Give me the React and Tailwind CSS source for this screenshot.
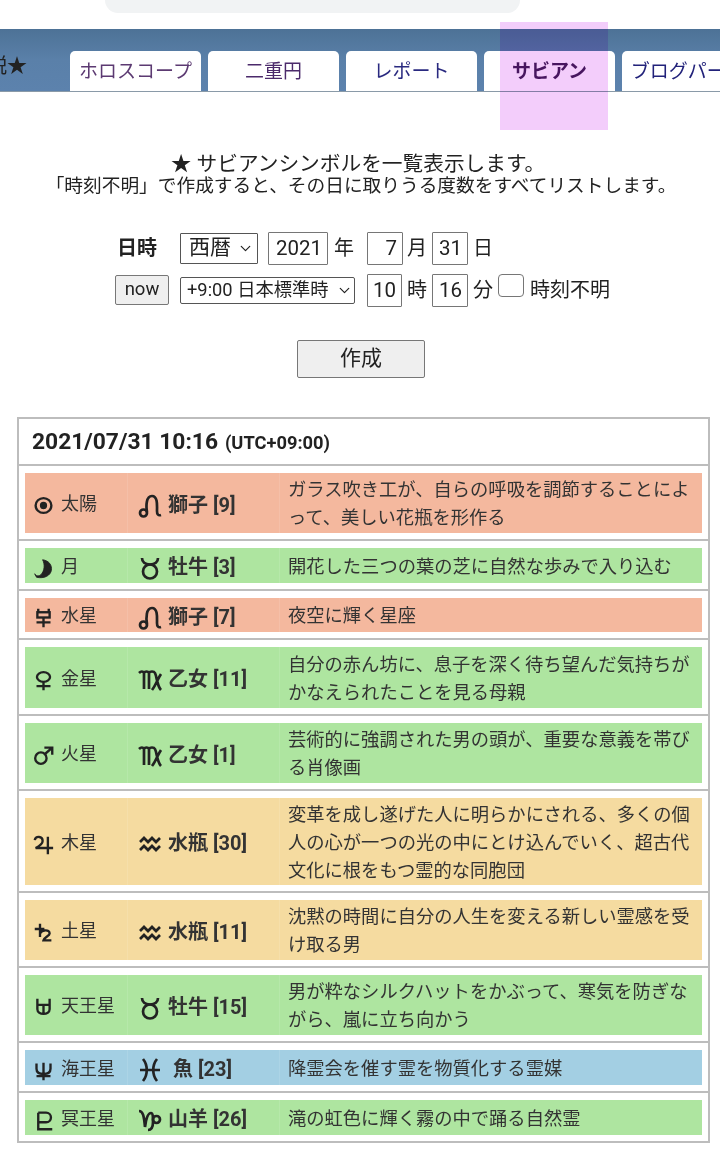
import { ChevronDown } from "lucide-react";

const jp = 'font-["Roboto","Noto_Sans_CJK_JP",sans-serif]';

// planet glyphs
const planets = {
  sun: (
    <>
      <ellipse cx="12" cy="12" rx="9" ry="8.5" />
      <circle cx="12" cy="12" r="2.8" fill="currentColor" />
    </>
  ),
  moon: <path d="M11 2c7 1 11 6 10 12-1 6-8 10-17 8l-2-4c1 3 5 3 7 1 4-4 5-11 2-17z" fill="currentColor" strokeWidth="1" />,
  mercury: (
    <>
      <path d="M6 2v4M18 2v4" />
      <rect x="5" y="6" width="14" height="6" />
      <path d="M12 12v11M4 17.500h16" />
    </>
  ),
  venus: (
    <>
      <ellipse cx="12" cy="8" rx="7.500" ry="5.500" />
      <path d="M12 14v9M4 18.500h16" />
    </>
  ),
  mars: (
    <>
      <circle cx="9" cy="15" r="6.500" />
      <path d="M14 10l8-7M13 3h9v8" />
    </>
  ),
  jupiter: <path d="M2 7c1-5 9-5 9 1 0 4-4 6-8 8h20M17 3v20" />,
  saturn: <path d="M8 2v15M2 8h11M8 13c2-4 11-5 11 0 0 3-6 4-7 8h9" />,
  uranus: <path d="M5 2v12c0 7 14 7 14 0V2M5 9h14M12 9v9" />,
  neptune: <path d="M4 4v6c0 4 3 6 8 6s8-2 8-6V4M12 3v20M4 18.500h16" />,
  pluto: <path d="M6 3v19h16M6 3h9a5 5 0 0 1 0 11H6" />,
};

// zodiac glyphs
const signs = {
  leo: (
    <>
      <circle cx="5.500" cy="19" r="3.500" />
      <path d="M9 18C8 12 8 2 14 2c6 0 5 10 5 15 0 3 1 5 4 4" />
    </>
  ),
  taurus: (
    <>
      <circle cx="12" cy="15.500" r="7" />
      <path d="M4 2c0 4 3 6.500 8 6.500S20 6 20 2" />
    </>
  ),
  virgo: <path d="M1 5c2-2 4-2 5 0V21M6 5c1-2 4-2 5 0V21M11 5c1-2 5-2 6 0 2 4 2 13 6 17M23 6c-3 4-5 11-9 16" />,
  aquarius: <path d="M2 10l4-4 4 4 4-4 4 4 4-4M2 18l4-4 4 4 4-4 4 4 4-4" />,
  pisces: <path d="M5 1c5 6 5 16 0 22M19 1c-5 6-5 16 0 22M2 12h20" />,
  capricorn: (
    <>
      <path d="M1 3c4 0 5 5 6 16 1-8 3-14 6-14 2 0 2 5 2 9 0 5-1 8-5 8" />
      <circle cx="18.500" cy="11.500" r="3.500" />
    </>
  ),
};

const rows = [
  { p: "sun", name: "太陽", s: "leo", sign: "獅子 [9]", text: "ガラス吹き工が、自らの呼吸を調節することによって、美しい花瓶を形作る", bg: "bg-[#f4b89e]", h: "h-[60px]" },
  { p: "moon", name: "月", s: "taurus", sign: "牡牛 [3]", text: "開花した三つの葉の芝に自然な歩みで入り込む", bg: "bg-[#aee5a0]", h: "h-[35px]" },
  { p: "mercury", name: "水星", s: "leo", sign: "獅子 [7]", text: "夜空に輝く星座", bg: "bg-[#f4b89e]", h: "h-[34px]" },
  { p: "venus", name: "金星", s: "virgo", sign: "乙女 [11]", text: "自分の赤ん坊に、息子を深く待ち望んだ気持ちがかなえられたことを見る母親", bg: "bg-[#aee5a0]", h: "h-[61px]" },
  { p: "mars", name: "火星", s: "virgo", sign: "乙女 [1]", text: "芸術的に強調された男の頭が、重要な意義を帯びる肖像画", bg: "bg-[#aee5a0]", h: "h-[60px]" },
  { p: "jupiter", name: "木星", s: "aquarius", sign: "水瓶 [30]", text: "変革を成し遂げた人に明らかにされる、多くの個人の心が一つの光の中にとけ込んでいく、超古代文化に根をもつ霊的な同胞団", bg: "bg-[#f5dba0]", h: "h-[87px]" },
  { p: "saturn", name: "土星", s: "aquarius", sign: "水瓶 [11]", text: "沈黙の時間に自分の人生を変える新しい霊感を受け取る男", bg: "bg-[#f5dba0]", h: "h-[60px]" },
  { p: "uranus", name: "天王星", s: "taurus", sign: "牡牛 [15]", text: "男が粋なシルクハットをかぶって、寒気を防ぎながら、嵐に立ち向かう", bg: "bg-[#aee5a0]", h: "h-[60px]" },
  { p: "neptune", name: "海王星", s: "pisces", sign: "魚 [23]", text: "降霊会を催す霊を物質化する霊媒", bg: "bg-[#a3cfe3]", h: "h-[35px]", indent: true },
  { p: "pluto", name: "冥王星", s: "capricorn", sign: "山羊 [26]", text: "滝の虹色に輝く霧の中で踊る自然霊", bg: "bg-[#aee5a0]", h: "h-[35px]" },
];

const tabs = [
  { label: "ホロスコープ", color: "text-[#5c3a72]" },
  { label: "二重円", color: "text-[#4b2a6b]" },
  { label: "レポート", color: "text-[#2a2a80]" },
  { label: "サビアン", color: "text-[#4a1a60] font-bold" },
  { label: "ブログパーツ", color: "text-[#22227a]" },
];

function Glyph({ children, className }) {
  return (
    <svg viewBox="0 0 24 24" fill="none" stroke="currentColor" strokeWidth="2.7" className={className}>
      {children}
    </svg>
  );
}

function NumBox({ value, className }) {
  return (
    <input
      readOnly
      value={value}
      className={`h-[33px] border border-[#767676] bg-white text-right text-[20.5px] text-[#222] pl-[2px] pr-[5px] rounded-[1px] ${className}`}
    />
  );
}

function Row({ row }) {
  return (
    <div className="pt-[7px] pb-[6px] px-[6px] border-b-2 border-[#bdbdbd] last:border-b-0">
      <div className={`flex ${row.h} ${row.bg} text-[#333]`}>
        <div className="w-[102px] flex items-center pl-[8px] text-[18px]">
          <Glyph className="w-[21px] h-[21px] mt-[5px] shrink-0 text-[#222]">{planets[row.p]}</Glyph>
          <span className="ml-[7px] pt-[1px] whitespace-nowrap">{row.name}</span>
        </div>
        <div className="w-[152px] flex items-center pl-[10px] border-l border-white/10 text-[20px] font-bold">
          <Glyph className="w-[24px] h-[24px] mt-[5px] shrink-0 text-[#222]">{signs[row.s]}</Glyph>
          <span className={`whitespace-nowrap pt-[3px] ${row.indent ? "ml-[11px]" : "ml-[6px]"}`}>{row.sign}</span>
        </div>
        <div className="flex-1 flex items-center pl-[8px] pr-[5px] pt-[2px] border-l border-white/10 text-[18.3px] leading-[28px]">
          <p>{row.text}</p>
        </div>
      </div>
    </div>
  );
}

export default function App() {
  return (
    <div className={`relative w-[720px] h-[1151px] overflow-hidden bg-white ${jp}`}>
      {/* browser search bar remnant */}
      <div className="ml-[105px] w-[415px] h-[13px] bg-[#f1f3f4] rounded-b-[22px]" />

      {/* header band */}
      <div className="mt-[16px] h-[63px] bg-gradient-to-b from-[#4d7296] via-[#5a80a9] to-[#5c82ad] border-b border-[#8a9aa8] flex items-end overflow-hidden">
        <div className="w-[70px] shrink-0 self-center flex justify-end pr-[43px] pt-[12px] text-[20px] text-[#222] whitespace-nowrap overflow-hidden">
          <span className="shrink-0">説★</span>
        </div>
        <div className="flex gap-[7px]">
          {tabs.map((t) => (
            <div
              key={t.label}
              className={`w-[131px] h-[40px] shrink-0 bg-white rounded-t-[5px] flex items-center justify-center pt-[2px] text-[19px] whitespace-nowrap overflow-hidden ${t.color}`}
            >
              {t.label}
            </div>
          ))}
        </div>
      </div>

      {/* highlight over the current tab */}
      <div className="absolute left-[500px] top-[22px] w-[108px] h-[108px] bg-[#f3cdfb] mix-blend-multiply" />

      {/* intro */}
      <div className="mt-[59px] text-center text-[#222]">
        <p className="text-[20.7px] leading-[24px] pr-[4px] pt-[1px]">★ サビアンシンボルを一覧表示します。</p>
        <p className="text-[18.7px] leading-[20px] pl-[2px] whitespace-nowrap">「時刻不明」で作成すると、その日に取りうる度数をすべてリストします。</p>
      </div>

      {/* form */}
      <div className="mt-[35px] pl-[115px] text-[#222] text-[20px]">
        <div className="flex items-center h-[34px]">
          <span className="w-[65px] pl-[2px] font-bold">日時</span>
          <div className="w-[78px] h-[31px] border border-[#555] rounded-[1px] flex items-center justify-between pl-[8px] pr-[3px]">
            <span className="text-[21px]">西暦</span>
            <ChevronDown className="w-[17px] h-[17px]" strokeWidth={1.7} />
          </div>
          <NumBox value="2021" className="w-[60px] ml-[10px]" />
          <span className="ml-[6px]">年</span>
          <NumBox value="7" className="w-[36px] ml-[13px]" />
          <span className="ml-[4px]">月</span>
          <NumBox value="31" className="w-[36px] ml-[5px]" />
          <span className="ml-[5px]">日</span>
        </div>
        <div className="flex items-center h-[34px] mt-[8px]">
          <button className="w-[54px] h-[30px] bg-[#efefef] border border-[#777] rounded-[2px] text-[18.5px]">now</button>
          <div className="w-[175px] h-[27px] ml-[11px] border border-[#555] rounded-[2px] flex items-center justify-between pl-[6px] pr-[1px] text-[18.3px]">
            <span className="whitespace-nowrap">+9:00 日本標準時</span>
            <ChevronDown className="w-[17px] h-[17px] shrink-0" strokeWidth={1.7} />
          </div>
          <NumBox value="10" className="w-[35px] ml-[12px]" />
          <span className="ml-[5px]">時</span>
          <NumBox value="16" className="w-[36px] ml-[5px]" />
          <span className="ml-[5px]">分</span>
          <div className="w-[26px] h-[23px] ml-[5px] mb-[9px] border border-[#767676] rounded-[4px] bg-white" />
          <span className="ml-[6px]">時刻不明</span>
        </div>
      </div>

      <div className="mt-[33px] flex justify-center pl-[2px]">
        <button className="w-[128px] h-[38px] bg-[#efefef] border border-[#777] rounded-[2px] text-[21px] text-[#222]">作成</button>
      </div>

      {/* result table */}
      <div className="mt-[39px] ml-[17px] w-[693px] border-2 border-[#bdbdbd]">
        <div className="h-[47px] flex items-center pl-[13px] pt-[2px] border-b-2 border-[#bdbdbd] text-[#222] font-bold">
          <span className="text-[22.8px]">2021/07/31 10:16</span>
          <span className="ml-[7px] text-[18.3px]">(UTC+09:00)</span>
        </div>
        {rows.map((row) => (
          <Row key={row.p} row={row} />
        ))}
      </div>
    </div>
  );
}
